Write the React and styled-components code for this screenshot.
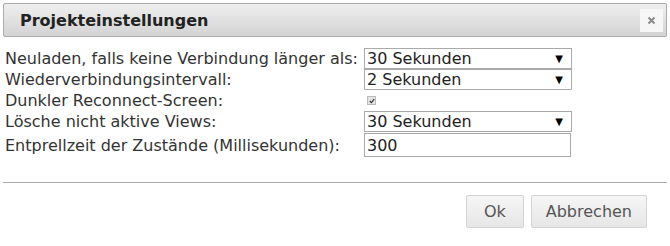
import React from "react";
import styled, { createGlobalStyle } from "styled-components";

const Global = createGlobalStyle`
  html, body { margin: 0; padding: 0; background: #fff; }
  body { font-family: "DejaVu Sans", Verdana, sans-serif; }
`;

const Dialog = styled.div`
  width: 670px;
  height: 246px;
  box-sizing: border-box;
  padding: 3px 3px 0 3px;
  background: #fff;
`;

const TitleBar = styled.div`
  height: 34px;
  box-sizing: border-box;
  border: 1px solid #aaa;
  border-radius: 2px;
  background: linear-gradient(#efefef, #d3d3d3);
  display: flex;
  align-items: center;
  justify-content: space-between;
  padding: 0 3px 0 16px;
`;

const Title = styled.span`
  font-weight: bold;
  font-size: 16px;
  color: #222;
`;

const CloseButton = styled.button`
  width: 23px;
  height: 23px;
  border: none;
  background: #f6f6f6;
  padding: 0;
  display: flex;
  align-items: center;
  justify-content: center;
`;

const Content = styled.div`
  padding: 11px 0 0 2px;
  display: grid;
  grid-template-columns: 359px 208px;
  grid-template-rows: 21px 21px 21px 21px 26px;
  align-items: center;
`;

const Label = styled.div`
  font-size: 16px;
  color: #333;
  white-space: nowrap;
  line-height: 21px;
`;

const Field = styled.div`
  display: flex;
  align-items: center;
`;

const Select = styled.div`
  width: 208px;
  height: 21px;
  box-sizing: border-box;
  border: 1px solid #a9a9a9;
  display: flex;
  align-items: center;
  justify-content: space-between;
  padding: 0 8px 0 2px;
  font-size: 16px;
  color: #222;
  background: #fff;
`;

const Arrow = styled.span`
  font-size: 10px;
  color: #000;
`;

const Input = styled.div`
  width: 207px;
  height: 24px;
  box-sizing: border-box;
  border: 1px solid #a9a9a9;
  display: flex;
  align-items: center;
  padding: 0 2px;
  font-size: 16px;
  color: #222;
`;

const Check = styled.span`
  margin-left: 3px;
  width: 7px;
  height: 7px;
  border: 1px solid #bbb;
  background: #e4e4e4;
  display: inline-flex;
  align-items: center;
  justify-content: center;
`;

const Separator = styled.hr`
  margin: 24px 0 0 0;
  border: none;
  border-top: 1px solid #aaa;
`;

const Buttons = styled.div`
  display: flex;
  justify-content: flex-end;
  gap: 7px;
  padding: 12px 20px 0 0;
`;

const Button = styled.button`
  height: 33px;
  box-sizing: border-box;
  border: 1px solid #d3d3d3;
  border-radius: 2px;
  background: linear-gradient(#f6f6f6, #e6e6e6);
  color: #555;
  font-family: "DejaVu Sans", Verdana, sans-serif;
  font-size: 16px;
  padding: 0 ${(p) => p.$pad || 14}px;
`;

const rows = [
  { label: "Neuladen, falls keine Verbindung länger als:", type: "select", value: "30 Sekunden" },
  { label: "Wiederverbindungsintervall:", type: "select", value: "2 Sekunden" },
  { label: "Dunkler Reconnect-Screen:", type: "check" },
  { label: "Lösche nicht aktive Views:", type: "select", value: "30 Sekunden" },
  { label: "Entprellzeit der Zustände (Millisekunden):", type: "input", value: "300" },
];

export default function App() {
  return (
    <>
      <Global />
      <Dialog>
        <TitleBar>
          <Title>Projekteinstellungen</Title>
          <CloseButton aria-label="close">
            <svg width="9" height="9" viewBox="0 0 9 9">
              <path d="M1.5 1.5 L7.5 7.5 M7.5 1.5 L1.5 7.5" stroke="#8a8a8a" strokeWidth="2" />
            </svg>
          </CloseButton>
        </TitleBar>
        <Content>
          {rows.map((r) => (
            <React.Fragment key={r.label}>
              <Label>{r.label}</Label>
              {r.type === "select" && (
                <Field>
                  <Select>
                    <span>{r.value}</span>
                    <Arrow>▼</Arrow>
                  </Select>
                </Field>
              )}
              {r.type === "check" && (
                <Field>
                  <Check>
                    <svg width="6" height="6" viewBox="0 0 6 6">
                      <path d="M0.8 3 L2.4 4.6 L5.2 1.2" stroke="#333" strokeWidth="1.2" fill="none" />
                    </svg>
                  </Check>
                </Field>
              )}
              {r.type === "input" && (
                <Field>
                  <Input>{r.value}</Input>
                </Field>
              )}
            </React.Fragment>
          ))}
        </Content>
        <Separator />
        <Buttons>
          <Button $pad={17}>Ok</Button>
          <Button $pad={14}>Abbrechen</Button>
        </Buttons>
      </Dialog>
    </>
  );
}
